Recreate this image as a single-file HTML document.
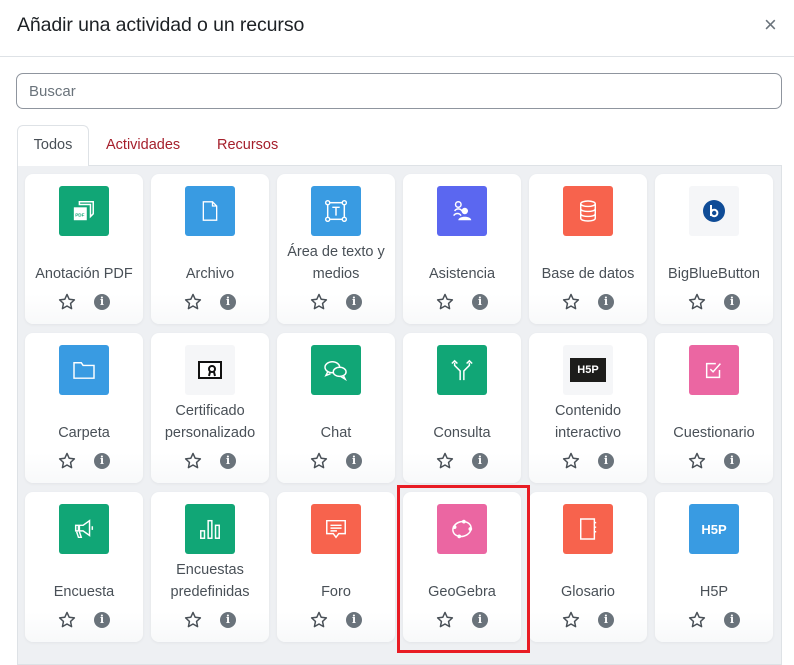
<!DOCTYPE html>
<html><head><meta charset="utf-8"><style>
*{margin:0;padding:0;box-sizing:border-box}
body{width:794px;height:649px;background:#fff;font-family:"Liberation Sans",sans-serif;color:#495057;position:relative;overflow:hidden}
.t{position:absolute;left:17px;top:14px;font-size:19.5px;color:#1d2125;font-weight:500;letter-spacing:-0.1px}
.x{position:absolute;left:764px;top:12px;font-size:22px;color:#6a737b}
.hr{position:absolute;left:0;top:56px;width:794px;height:1px;background:#dee2e6}
.s{position:absolute;left:16px;top:73px;width:766px;height:36px;border:1px solid #8f959e;border-radius:7px;padding:9px 12px;font-size:15px;color:#6a737b}
.tab{position:absolute;top:137px;font-size:14.5px;color:#a51f2b}
.tab0{position:absolute;left:17px;top:125px;width:72px;height:41px;border:1px solid #dee2e6;border-bottom:none;border-radius:6px 6px 0 0;background:#fff;color:#495057;font-size:14.5px;padding-top:11px;text-align:center;z-index:2}
.g{position:absolute;left:17px;top:165px;width:765px;height:500px;background:#eef0f3;border:1px solid #dee2e6}
.c{position:absolute;width:118px;height:150px;background:linear-gradient(#fff,#fff 80%,#f8f9fa);border-radius:8px;box-shadow:0 1px 3px rgba(0,0,0,.05)}
.i{position:absolute;left:34px;top:12px;width:50px;height:50px;border-radius:3px;display:flex;align-items:center;justify-content:center}
.l{position:absolute;left:-4px;width:126px;text-align:center;font-size:14.5px;line-height:22px;color:#495057}
.st{position:absolute;left:33px;top:119px}
.in{position:absolute;left:69px;top:120px;width:16px;height:16px;border-radius:50%;background:#6a737b;color:#fff;font-size:11px;font-weight:bold;text-align:center;line-height:16px;font-family:"DejaVu Serif",serif}
.red{position:absolute;left:397px;top:485px;width:133px;height:168px;border:3px solid #e81c24;z-index:5}
svg{display:block}
</style></head><body>
<div class="t">Añadir una actividad o un recurso</div>
<div class="x">×</div>
<div class="hr"></div>
<div class="s">Buscar</div>
<div class="tab0">Todos</div>
<div class="tab" style="left:106px">Actividades</div>
<div class="tab" style="left:217px">Recursos</div>
<div class="g"></div>
<div class="red"></div>
<div id="cards"></div>
<script>
const W='fill="none" stroke="#fff" stroke-width="1.6"';
const ic={
pdf:`<svg width="24" height="24" viewBox="0 0 26 26"><path d="M8 3h15v13l-3 3V6H8z" ${W}/><rect x="2" y="9" width="14" height="14" fill="#fff"/><text x="3.5" y="19" font-size="5" font-weight="bold" fill="#11a676" font-family="Liberation Sans">PDF</text></svg>`,
file:`<svg width="20" height="24" viewBox="0 0 24 26"><path d="M4 2h11l5 5v17H4z M15 2v5h5" ${W}/></svg>`,
text:`<svg width="24" height="24" viewBox="0 0 26 26"><rect x="4" y="4" width="18" height="18" ${W}/><circle cx="4" cy="4" r="2.2" fill="#399be2" stroke="#fff" stroke-width="1.5"/><circle cx="22" cy="4" r="2.2" fill="#399be2" stroke="#fff" stroke-width="1.5"/><circle cx="4" cy="22" r="2.2" fill="#399be2" stroke="#fff" stroke-width="1.5"/><circle cx="22" cy="22" r="2.2" fill="#399be2" stroke="#fff" stroke-width="1.5"/><path d="M9 9h8M13 9v9" ${W}/></svg>`,
asis:`<svg width="24" height="24" viewBox="0 0 26 26"><circle cx="9" cy="6" r="3" ${W}/><path d="M5 13c2-3 6-3 8 0M4 18c2-3 6-3 8 0" ${W}/><circle cx="16" cy="13" r="3.5" fill="#fff"/><path d="M9 23c0-5 14-5 14 0z" fill="#fff"/></svg>`,
db:`<svg width="20" height="24" viewBox="0 0 22 26"><ellipse cx="11" cy="5" rx="8" ry="3" ${W}/><path d="M3 5v16c0 4 16 4 16 0V5M3 10.5c0 4 16 4 16 0M3 16c0 4 16 4 16 0" ${W}/></svg>`,
bbb:`<svg width="22" height="22" viewBox="0 0 22 22"><circle cx="11" cy="11" r="11" fill="#0f4c97"/><path d="M8 5v11M8 13a3.2 3.2 0 1 0 6.4 0a3.2 3.2 0 1 0-6.4 0" fill="none" stroke="#fff" stroke-width="2"/></svg>`,
fold:`<svg width="24" height="20" viewBox="0 0 26 22"><path d="M2 3h8l2 3h12v14H2z" ${W}/></svg>`,
cert:`<svg width="24" height="18" viewBox="0 0 24 18"><rect x="1" y="1" width="22" height="16" fill="#fff" stroke="#111" stroke-width="2"/><circle cx="14" cy="8" r="3" fill="none" stroke="#111" stroke-width="2"/><path d="M12 11l-1 4M16 11l1 4" stroke="#111" stroke-width="2"/></svg>`,
chat:`<svg width="26" height="22" viewBox="0 0 28 24"><ellipse cx="10" cy="9" rx="8" ry="6" ${W}/><path d="M5 14l-2 4 5-2" ${W}/><ellipse cx="18" cy="14" rx="7" ry="5" fill="#11a676" stroke="#fff" stroke-width="1.6"/><path d="M22 18l2 4-5-3" ${W}/></svg>`,
cons:`<svg width="24" height="24" viewBox="0 0 26 26"><path d="M11 24V14L5 8V5M15 24V14l6-6V5M2 6l3-3 3 3M18 6l3-3 3 3" ${W}/></svg>`,
h5pd:`<div style="width:36px;height:24px;background:#1d1d1b;color:#fff;font-weight:bold;font-size:11px;display:flex;align-items:center;justify-content:center">H5P</div>`,
quiz:`<svg width="22" height="22" viewBox="0 0 24 24"><path d="M18 12v8H4V5h10" ${W}/><path d="M8 11l3 3 8-9" ${W}/></svg>`,
enc:`<svg width="24" height="24" viewBox="0 0 26 26"><path d="M8 9h4l7-5v16l-7-5H8zM4 9h3v6H4zM8 16l2 6H7l-2-6M22 10v4" ${W}/></svg>`,
bars:`<svg width="24" height="24" viewBox="0 0 26 26"><rect x="3" y="15" width="4" height="8" ${W}/><rect x="11" y="4" width="4" height="19" ${W}/><rect x="19" y="9" width="4" height="14" ${W}/></svg>`,
foro:`<svg width="24" height="24" viewBox="0 0 26 26"><path d="M3 4h20v14H16l-3 4-3-4H3z" ${W}/><path d="M7 9h12M7 12h12M7 15h7" ${W}/></svg>`,
geo:`<svg width="24" height="24" viewBox="0 0 26 26"><ellipse cx="13" cy="13" rx="10" ry="8" transform="rotate(-15 13 13)" ${W}/><circle cx="5" cy="11" r="2" fill="#fff"/><circle cx="15" cy="5" r="2" fill="#fff"/><circle cx="22" cy="13" r="2" fill="#fff"/><circle cx="10" cy="21" r="2" fill="#fff"/></svg>`,
glos:`<svg width="20" height="24" viewBox="0 0 22 26"><path d="M3 2h15v22H3zM18 6h2M18 11h2M18 16h2" ${W}/></svg>`,
h5p:`<div style="color:#fff;font-weight:bold;font-size:13px">H5P</div>`
};
const d=[
['#11a676','pdf','Anotación PDF'],['#399be2','file','Archivo'],['#399be2','text','Área de texto y|medios'],['#5b67f0','asis','Asistencia'],['#f7634d','db','Base de datos'],['#f5f6f8','bbb','BigBlueButton'],
['#399be2','fold','Carpeta'],['#f5f6f8','cert','Certificado|personalizado'],['#11a676','chat','Chat'],['#11a676','cons','Consulta'],['#f5f6f8','h5pd','Contenido|interactivo'],['#eb66a2','quiz','Cuestionario'],
['#11a676','enc','Encuesta'],['#11a676','bars','Encuestas|predefinidas'],['#f7634d','foro','Foro'],['#eb66a2','geo','GeoGebra'],['#f7634d','glos','Glosario'],['#399be2','h5p','H5P']];
const star='<svg width="18" height="17" viewBox="0 0 24 23"><path d="M12 2l3 6.5 7 .8-5.2 4.8 1.4 7-6.2-3.5-6.2 3.5 1.4-7L2 9.3l7-.8z" fill="none" stroke="#495057" stroke-width="2" stroke-linejoin="round"/></svg>';
let h='';
d.forEach((e,k)=>{const x=25+(k%6)*126,y=174+Math.floor(k/6)*159;const p=e[2].split('|');
const lt=p.length>1?67:89;
h+=`<div class="c" style="left:${x}px;top:${y}px"><div class="i" style="background:${e[0]}">${ic[e[1]]}</div><div class="l" style="top:${lt}px">${p.join('<br>')}</div><div class="st">${star}</div><div class="in">i</div></div>`;});
document.getElementById('cards').innerHTML=h;
</script>
</body></html>
